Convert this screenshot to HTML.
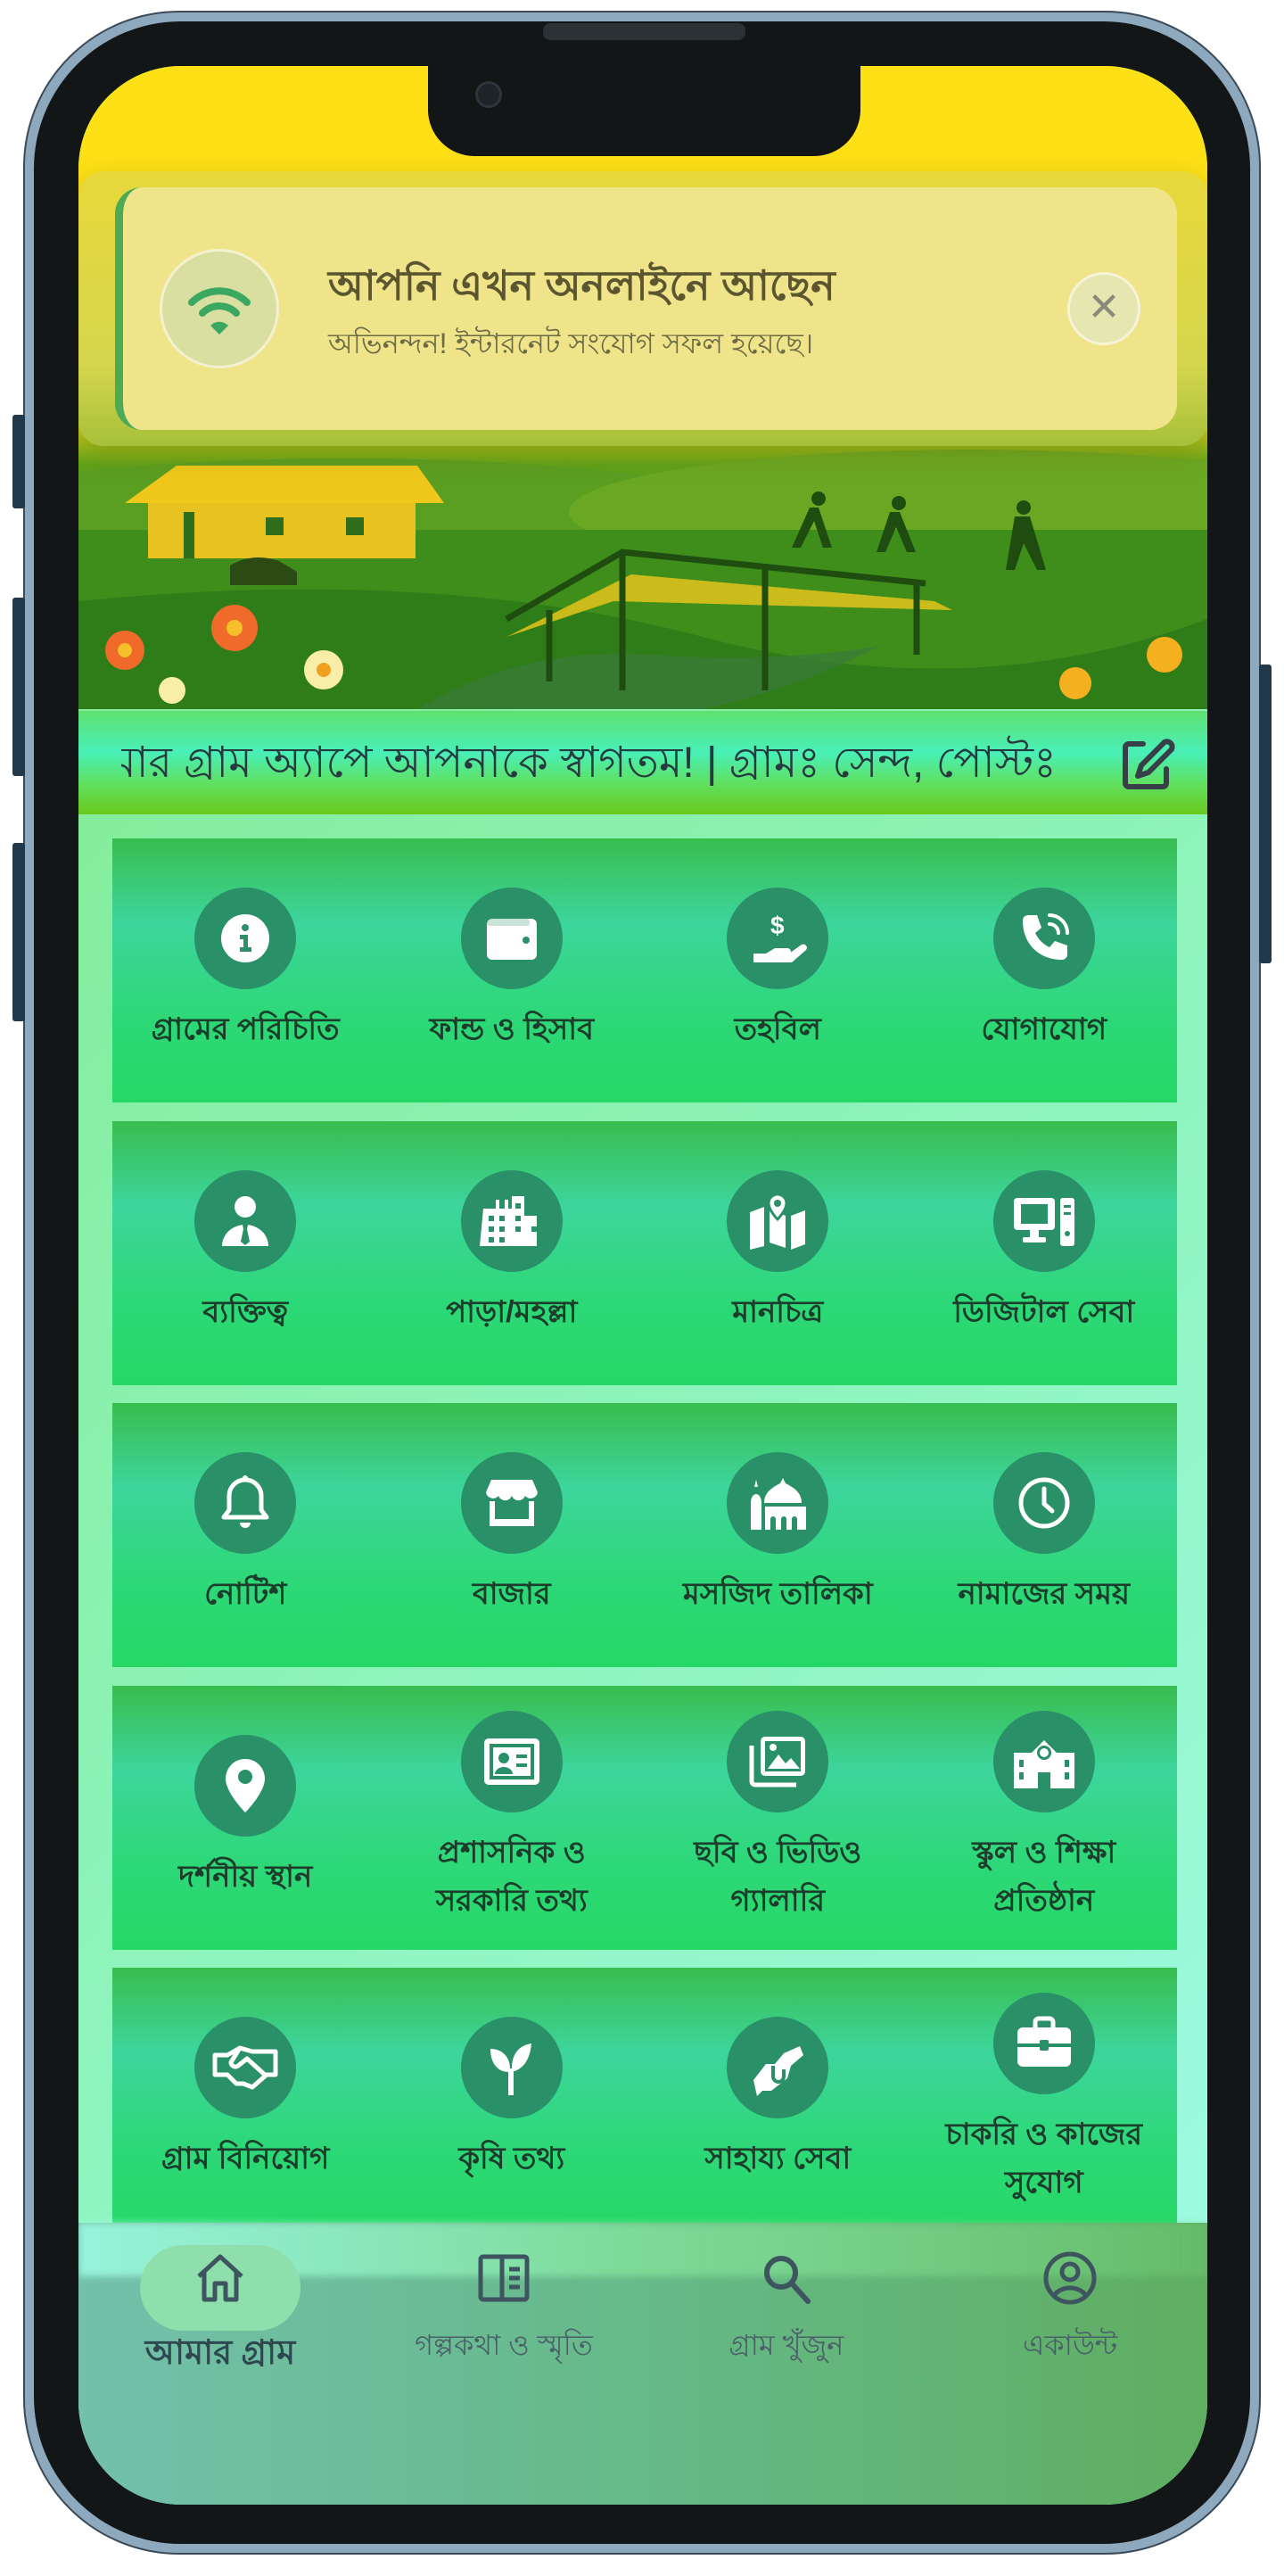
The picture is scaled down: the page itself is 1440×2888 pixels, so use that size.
<!DOCTYPE html>
<html><head><meta charset="utf-8">
<style>
*{margin:0;padding:0;box-sizing:border-box}
body{width:1440px;height:2888px;background:#fff;position:relative;overflow:hidden;font-family:"Liberation Sans","Noto Sans CJK SC",sans-serif}
.bn{font-family:"Liberation Sans","Noto Sans CJK SC","WenQuanYi Zen Hei",sans-serif}
.frame{position:absolute;left:26px;top:12px;width:1388px;height:2852px;border-radius:175px;background:#8ea8bd;border:2px solid #3a4a58}
.bezel{position:absolute;left:38px;top:24px;width:1364px;height:2828px;border-radius:165px;background:#121617}
.btn{position:absolute;background:#22394b;border-radius:3px}
.screen{position:absolute;left:88px;top:74px;width:1266px;height:2734px;border-radius:115px;overflow:hidden;background:linear-gradient(135deg,#7fe98a 0%,#8ff5c0 60%,#a0fbe8 100%)}
.notch{position:absolute;left:392px;top:-2px;width:485px;height:103px;background:#121617;border-radius:0 0 52px 52px}
.cam{position:absolute;left:53px;top:19px;width:30px;height:30px;border-radius:50%;background:#1d2327;border:3px solid #2c353a}
.top{position:absolute;left:0;top:0;width:1266px;height:721px;background:linear-gradient(#fde016 0%,#fde016 20%,#e4d820 55%,#5fa21a 62%,#3e8a18 100%)}
.notifwrap{position:absolute;left:0;top:118px;width:1266px;height:308px;border-radius:28px;background:linear-gradient(#e8d83a,#d5d64d 70%,#a6c03a);box-shadow:0 10px 30px rgba(120,110,0,.35)}
.notif{position:absolute;left:41px;top:136px;width:1191px;height:272px;border-radius:30px;background:#efe48a;border-left:9px solid #4caa55}
.wifi{position:absolute;left:91px;top:205px;width:134px;height:134px;border-radius:50%;background:#d8dfa0;border:3px solid #f4f1d0}
.close{position:absolute;left:1109px;top:231px;width:82px;height:82px;border-radius:50%;background:#e6e7b0;border:3px solid #f6f3d8;color:#8a8a7a;font-size:44px;text-align:center;line-height:74px}
.t1{position:absolute;left:280px;top:212px;font-size:46px;color:#5b5530;font-weight:bold;white-space:nowrap}
.t2{position:absolute;left:280px;top:286px;font-size:32px;color:#6b6a45;white-space:nowrap}
.marq{position:absolute;left:0;top:723px;width:1266px;height:116px;background:linear-gradient(#60e070 0%,#48f0b8 40%,#60e060 70%,#6ac81c 100%);overflow:hidden}
.clip{position:absolute;left:48px;top:0;width:1080px;height:116px;overflow:hidden}
.clip span{position:absolute;left:-66px;top:22px;font-size:48px;color:#273b3f;white-space:nowrap}
.card{position:absolute;left:38px;width:1194px;height:296px;background:linear-gradient(#38bd4e 0%,#3dd59c 32%,#2ed87a 65%,#25d865 100%);display:flex}
.cell{width:298.5px;height:100%;display:flex;flex-direction:column;align-items:center;justify-content:center}
.ic{width:114px;height:114px;border-radius:50%;background:#2a9068;display:flex;align-items:center;justify-content:center;margin-bottom:18px}
.lb{font-size:34px;color:#1c3d2b;text-align:center;line-height:54px;font-weight:bold;white-space:nowrap}
.nav{position:absolute;left:0;top:2418px;width:1266px;height:316px;background:linear-gradient(90deg,#73c0ab 0%,#66b988 50%,#5fae62 100%)}
.nav:before{content:"";position:absolute;left:0;top:0;width:100%;height:60px;background:linear-gradient(90deg,rgba(160,255,230,.8),rgba(140,240,160,.6),rgba(120,220,120,.3));filter:blur(4px)}
.ni{position:absolute;top:30px;width:320px;display:flex;flex-direction:column;align-items:center}
.ni .l{font-size:32px;color:#4a6068;margin-top:18px;white-space:nowrap}
.pill{position:absolute;left:69px;top:25px;width:180px;height:96px;border-radius:48px;background:#8fdfac}
</style></head><body>
<div class="frame"></div>
<div class="bezel"></div>
<div class="btn" style="left:14px;top:465px;width:14px;height:105px"></div>
<div class="btn" style="left:14px;top:670px;width:14px;height:200px"></div>
<div class="btn" style="left:14px;top:945px;width:14px;height:200px"></div>
<div class="btn" style="left:1412px;top:745px;width:14px;height:335px"></div>
<div style="position:absolute;left:609px;top:26px;width:227px;height:19px;border-radius:8px;background:#2a3235"></div>
<div class="screen">
 <div class="top">
  <svg width="1266" height="721" style="position:absolute;left:0;top:0">
   <ellipse cx="300" cy="520" rx="520" ry="80" fill="#5a9e22"/>
   <ellipse cx="1000" cy="500" rx="450" ry="70" fill="#6aa824"/>
   <rect x="0" y="520" width="1266" height="201" fill="#3f8e1c"/>
   <path d="M0 600 Q400 560 700 640 T1266 620 V721 H0Z" fill="#2f7d18"/>
   <path d="M380 721 Q500 650 640 660 T900 650 Q800 700 700 721Z" fill="#3a7a3a" opacity=".7"/>
   <polygon points="52,490 110,448 380,448 410,490" fill="#f0c81c"/>
   <rect x="78" y="490" width="300" height="62" fill="#e8c21e"/>
   <rect x="118" y="500" width="12" height="52" fill="#2f6d1a"/>
   <rect x="210" y="506" width="20" height="20" fill="#2f6d1a"/>
   <rect x="300" y="506" width="20" height="20" fill="#2f6d1a"/>
   <path d="M480 640 L620 570 L960 600 L980 610 L600 600Z" fill="#f0c81c" opacity=".8"/>
   <g stroke="#1f4d10" stroke-width="7" fill="none"><path d="M480 620 L610 545 L950 580"/><path d="M528 610 V690 M610 545 V700 M770 560 V700 M940 580 V660"/></g>
   <g fill="#1f4d10"><circle cx="830" cy="485" r="8"/><path d="M820 495 l-20 45 h10 l15-30 l10 30 h10 l-15-45Z"/><circle cx="920" cy="490" r="8"/><path d="M910 500 l-15 45 h10 l12-28 l12 28 h10 l-18-45Z"/><circle cx="1060" cy="495" r="8"/><path d="M1050 505 l-10 60 h10 l10-30 l15 30 h10 l-18-60Z"/></g>
   <path d="M170 560 q25-15 55-5 l20 12 v15 h-75Z" fill="#2b4a14"/>
   <g><circle cx="52" cy="655" r="22" fill="#f06a2a"/><circle cx="52" cy="655" r="8" fill="#f6c02a"/><circle cx="175" cy="630" r="26" fill="#f06a2a"/><circle cx="175" cy="630" r="9" fill="#f6c02a"/><circle cx="275" cy="677" r="22" fill="#f8eeaa"/><circle cx="275" cy="677" r="8" fill="#f0a020"/><circle cx="105" cy="700" r="15" fill="#f8eeaa"/><circle cx="1118" cy="692" r="18" fill="#f5b020"/><circle cx="1218" cy="660" r="20" fill="#f5b020"/></g>
  </svg>
 </div>
 <div class="notch"><div class="cam"></div></div>
 <div class="notifwrap"></div>
 <div class="notif"></div>
 <div class="wifi"><svg width="134" height="134" viewBox="0 0 134 134" style="position:absolute;left:-3px;top:-3px"><g fill="none" stroke="#3aa860" stroke-width="8" stroke-linecap="round"><path d="M36 60 a44 44 0 0 1 62 0"/><path d="M48 72 a27 27 0 0 1 38 0"/></g><path d="M67 96 l-10-10 a14 14 0 0 1 20 0Z" fill="#3aa860"/></svg></div>
 <div class="t1 bn">আপনি এখন অনলাইনে আছেন</div>
 <div class="t2 bn">অভিনন্দন! ইন্টারনেট সংযোগ সফল হয়েছে।</div>
 <div class="close">✕</div>
 <div class="marq"><div class="clip"><span class="bn">আমার গ্রাম অ্যাপে আপনাকে স্বাগতম! | গ্রামঃ সেন্দ, পোস্টঃ</span></div>
  <svg width="60" height="60" viewBox="0 0 60 60" style="position:absolute;left:1170px;top:31px"><g fill="none" stroke="#374048" stroke-width="6" stroke-linecap="round" stroke-linejoin="round"><path d="M24 6 H8 a4 4 0 0 0-4 4 V50 a4 4 0 0 0 4 4 H46 a4 4 0 0 0 4-4 V34"/><path d="M48 4 a6 6 0 0 1 8 8 L30 38 L18 42 L22 30Z"/></g></svg>
 </div>

 <div class="card" style="top:866px">
  <div class="cell"><div class="ic"><svg width="60" height="60" viewBox="0 0 60 60"><circle cx="30" cy="30" r="27" fill="#fff"/><circle cx="30" cy="18" r="4" fill="#2a9068"/><path d="M24 26 h9 v14 h4 v5 h-13 v-5 h4 v-9 h-4z" fill="#2a9068"/></svg></div><div class="lb bn">গ্রামের পরিচিতি</div></div>
  <div class="cell"><div class="ic"><svg width="64" height="60" viewBox="0 0 64 60"><rect x="4" y="8" width="56" height="46" rx="6" fill="#fff"/><rect x="4" y="8" width="48" height="8" rx="3" fill="#2a9068" opacity=".25"/><circle cx="48" cy="32" r="4" fill="#2a9068"/></svg></div><div class="lb bn">ফান্ড ও হিসাব</div></div>
  <div class="cell"><div class="ic"><svg width="70" height="70" viewBox="0 0 70 70"><text x="27" y="30" fill="#fff" font-size="28" font-weight="bold" font-family="Liberation Sans">$</text><path d="M8 52 h14 l10-6 h14 a4 4 0 0 1 0 8 h-12 l14-2 l14-10 a4 4 0 0 1 5 6 l-16 14 h-43z" fill="#fff"/></svg></div><div class="lb bn">তহবিল</div></div>
  <div class="cell"><div class="ic"><svg width="64" height="64" viewBox="0 0 64 64"><path d="M14 6 l10 0 l5 14 l-7 6 a34 34 0 0 0 16 16 l6-7 l14 5 v10 a6 6 0 0 1-6 6 C26 56 8 38 8 12 a6 6 0 0 1 6-6z" fill="#fff"/><g fill="none" stroke="#fff" stroke-width="4" stroke-linecap="round"><path d="M38 6 a20 20 0 0 1 20 20"/><path d="M38 16 a10 10 0 0 1 10 10"/></g></svg></div><div class="lb bn">যোগাযোগ</div></div>
 </div>

 <div class="card" style="top:1183px">
  <div class="cell"><div class="ic"><svg width="60" height="64" viewBox="0 0 60 64"><circle cx="30" cy="16" r="12" fill="#fff"/><path d="M4 60 a26 24 0 0 1 52 0z" fill="#fff"/><path d="M27 36 h6 l-1 5 l3 14 l-5 4 l-5-4 l3-14z" fill="#2a9068"/></svg></div><div class="lb bn">ব্যক্তিত্ব</div></div>
  <div class="cell"><div class="ic"><svg width="72" height="64" viewBox="0 0 72 64"><path d="M4 18 h14 v-10 h4 v10 h6 v-10 h4 v10 h4 v-14 h14 v22 h14 v34 h-64z" fill="#fff"/><g fill="#2a9068"><rect x="10" y="26" width="6" height="6"/><rect x="22" y="26" width="6" height="6"/><rect x="10" y="38" width="6" height="6"/><rect x="22" y="38" width="6" height="6"/><rect x="10" y="50" width="6" height="6"/><rect x="22" y="50" width="6" height="6"/><rect x="40" y="12" width="6" height="6"/><rect x="40" y="26" width="6" height="6"/><rect x="40" y="38" width="6" height="6"/><rect x="58" y="38" width="6" height="6"/></g></svg></div><div class="lb bn">পাড়া/মহল্লা</div></div>
  <div class="cell"><div class="ic"><svg width="70" height="64" viewBox="0 0 70 64"><path d="M4 22 l16-6 v44 l-16 4z M26 18 l18 8 v36 l-18-6z M50 26 l16-6 v38 l-16 6z" fill="#fff"/><path d="M35 2 a10 10 0 0 1 10 10 c0 8-10 18-10 18 s-10-10-10-18 a10 10 0 0 1 10-10z" fill="#fff" stroke="#2a9068" stroke-width="3"/><circle cx="35" cy="12" r="4" fill="#2a9068"/></svg></div><div class="lb bn">মানচিত্র</div></div>
  <div class="cell"><div class="ic"><svg width="76" height="64" viewBox="0 0 76 64"><rect x="4" y="6" width="46" height="36" rx="4" fill="#fff"/><rect x="12" y="13" width="30" height="22" fill="#2a9068"/><rect x="22" y="42" width="10" height="8" fill="#fff"/><rect x="14" y="50" width="26" height="6" rx="2" fill="#fff"/><rect x="56" y="6" width="16" height="54" rx="3" fill="#fff"/><g fill="#2a9068"><rect x="60" y="14" width="8" height="3"/><rect x="60" y="22" width="8" height="3"/><circle cx="64" cy="46" r="3"/></g></svg></div><div class="lb bn">ডিজিটাল সেবা</div></div>
 </div>

 <div class="card" style="top:1499px">
  <div class="cell"><div class="ic"><svg width="60" height="64" viewBox="0 0 60 64"><path d="M30 6 a18 18 0 0 1 18 18 v16 l6 8 h-48 l6-8 v-16 a18 18 0 0 1 18-18z" fill="none" stroke="#fff" stroke-width="5" stroke-linejoin="round"/><circle cx="30" cy="4" r="3" fill="#fff"/><path d="M24 54 a6 6 0 0 0 12 0z" fill="#fff"/></svg></div><div class="lb bn">নোটিশ</div></div>
  <div class="cell"><div class="ic"><svg width="70" height="64" viewBox="0 0 70 64"><path d="M6 20 l6-14 h46 l6 14 a8 8 0 0 1-14 4 a8 8 0 0 1-15 0 a8 8 0 0 1-15 0 a8 8 0 0 1-14-4z" fill="#fff"/><path d="M10 30 v28 h50 v-28 h-6 v20 h-38 v-20z" fill="#fff"/></svg></div><div class="lb bn">বাজার</div></div>
  <div class="cell"><div class="ic"><svg width="76" height="64" viewBox="0 0 76 64"><path d="M8 62 v-30 a6 10 0 0 1 12 0 v30z" fill="#fff"/><path d="M14 6 l2 8 h-4z" fill="#fff"/><path d="M44 4 l3 6 c12 6 18 12 18 22 h-42 c0-10 6-16 18-22z" fill="#fff"/><path d="M24 36 h46 v26 h-46z" fill="#fff"/><g fill="#2a9068"><path d="M30 62 v-12 a3 3 0 0 1 6 0 v12z"/><path d="M42 62 v-12 a3 3 0 0 1 6 0 v12z"/><path d="M54 62 v-12 a3 3 0 0 1 6 0 v12z"/></g></svg></div><div class="lb bn">মসজিদ তালিকা</div></div>
  <div class="cell"><div class="ic"><svg width="64" height="64" viewBox="0 0 64 64"><circle cx="32" cy="32" r="26" fill="none" stroke="#fff" stroke-width="5"/><path d="M32 16 v17 l9 8" fill="none" stroke="#fff" stroke-width="5" stroke-linecap="round"/></svg></div><div class="lb bn">নামাজের সময়</div></div>
 </div>

 <div class="card" style="top:1816px">
  <div class="cell"><div class="ic"><svg width="50" height="64" viewBox="0 0 50 64"><path d="M25 2 a22 22 0 0 1 22 22 c0 16-22 38-22 38 s-22-22-22-38 a22 22 0 0 1 22-22z" fill="#fff"/><circle cx="25" cy="22" r="8" fill="#2a9068"/></svg></div><div class="lb bn">দর্শনীয় স্থান</div></div>
  <div class="cell"><div class="ic"><svg width="70" height="64" viewBox="0 0 70 64"><rect x="4" y="6" width="62" height="52" rx="5" fill="#fff"/><rect x="10" y="12" width="50" height="40" fill="#2a9068"/><rect x="14" y="16" width="42" height="32" fill="#fff"/><circle cx="26" cy="28" r="6" fill="#2a9068"/><path d="M16 46 a10 8 0 0 1 20 0z" fill="#2a9068"/><rect x="40" y="24" width="12" height="4" fill="#2a9068"/><rect x="40" y="34" width="12" height="4" fill="#2a9068"/></svg></div><div class="lb bn">প্রশাসনিক ও<br>সরকারি তথ্য</div></div>
  <div class="cell"><div class="ic"><svg width="70" height="64" viewBox="0 0 70 64"><path d="M6 14 v40 a4 4 0 0 0 4 4 h46" fill="none" stroke="#fff" stroke-width="5"/><rect x="16" y="4" width="50" height="44" rx="5" fill="#fff"/><rect x="21" y="9" width="40" height="34" fill="#2a9068"/><path d="M24 40 l12-16 l8 10 l6-6 l10 12z" fill="#fff"/><circle cx="30" cy="16" r="4" fill="#fff"/></svg></div><div class="lb bn">ছবি ও ভিডিও<br>গ্যালারি</div></div>
  <div class="cell"><div class="ic"><svg width="76" height="64" viewBox="0 0 76 64"><path d="M4 22 h20 l14-14 l14 14 h20 v40 h-68z" fill="#fff"/><circle cx="38" cy="22" r="8" fill="#2a9068"/><circle cx="38" cy="22" r="5" fill="#fff"/><g fill="#2a9068"><rect x="10" y="30" width="5" height="8"/><rect x="10" y="44" width="5" height="8"/><rect x="61" y="30" width="5" height="8"/><rect x="61" y="44" width="5" height="8"/><rect x="31" y="44" width="14" height="18"/></g></svg></div><div class="lb bn">স্কুল ও শিক্ষা<br>প্রতিষ্ঠান</div></div>
 </div>

 <div class="card" style="top:2132px">
  <div class="cell"><div class="ic"><svg width="80" height="60" viewBox="0 0 80 60"><g fill="none" stroke="#fff" stroke-width="5" stroke-linejoin="round"><path d="M6 16 h14 l14-8 l14 4 h26 v26 h-10 l-16 14 l-10-4 l-8 0 l-10-10 h-14z"/><path d="M34 8 l-10 16 a5 5 0 0 0 8 4 l10-8 l20 18"/></g></svg></div><div class="lb bn">গ্রাম বিনিয়োগ</div></div>
  <div class="cell"><div class="ic"><svg width="60" height="66" viewBox="0 0 60 66"><path d="M27 64 v-26 C14 38 6 28 6 12 C20 12 28 22 28 34" fill="#fff"/><path d="M29 64 v-26 C40 36 50 28 52 6 C38 8 30 18 30 34" fill="#fff"/><rect x="26" y="34" width="6" height="30" fill="#fff"/></svg></div><div class="lb bn">কৃষি তথ্য</div></div>
  <div class="cell"><div class="ic"><svg width="70" height="64" viewBox="0 0 70 64"><path d="M8 46 l14-18 h10 l10-12 l18-8 l4 10 l-14 12 l-4 14 l-18 14 l-10 0 l-6 6 z" fill="#fff"/><path d="M30 30 v12 a6 6 0 0 0 12 0 v-8" fill="none" stroke="#2a9068" stroke-width="4"/></svg></div><div class="lb bn">সাহায্য সেবা</div></div>
  <div class="cell"><div class="ic"><svg width="68" height="64" viewBox="0 0 68 64"><path d="M24 14 v-6 a4 4 0 0 1 4-4 h12 a4 4 0 0 1 4 4 v6" fill="none" stroke="#fff" stroke-width="5"/><rect x="4" y="14" width="60" height="44" rx="6" fill="#fff"/><rect x="4" y="32" width="60" height="4" fill="#2a9068"/><rect x="29" y="28" width="10" height="12" rx="2" fill="#2a9068"/></svg></div><div class="lb bn">চাকরি ও কাজের<br>সুযোগ</div></div>
 </div>

 <div class="nav">
  <div class="pill"></div>
  <div class="ni" style="left:-1px"><svg width="64" height="64" viewBox="0 0 64 64"><g fill="none" stroke="#3e5560" stroke-width="5" stroke-linejoin="round"><path d="M8 30 L32 8 L56 30"/><path d="M14 26 V56 H26 V38 H38 V56 H50 V26"/></g></svg><div class="l bn" style="color:#2e4850;font-size:38px;font-weight:bold;margin-top:22px">আমার গ্রাম</div></div>
  <div class="ni" style="left:317px"><svg width="64" height="64" viewBox="0 0 64 64"><g fill="none" stroke="#3e5560" stroke-width="5"><rect x="6" y="8" width="52" height="48" rx="3"/><path d="M30 8 V56"/><path d="M38 22 h12 M38 32 h12 M38 42 h12"/></g></svg><div class="l bn">গল্পকথা ও স্মৃতি</div></div>
  <div class="ni" style="left:634px"><svg width="64" height="64" viewBox="0 0 64 64"><g fill="none" stroke="#3e5560" stroke-width="6" stroke-linecap="round"><circle cx="26" cy="26" r="16"/><path d="M38 38 L56 58"/></g></svg><div class="l bn">গ্রাম খুঁজুন</div></div>
  <div class="ni" style="left:952px"><svg width="64" height="64" viewBox="0 0 64 64"><g fill="none" stroke="#3e5560" stroke-width="5"><circle cx="32" cy="32" r="27"/><circle cx="32" cy="25" r="9"/><path d="M14 52 a20 16 0 0 1 36 0"/></g></svg><div class="l bn">একাউন্ট</div></div>
 </div>
</div>
</body></html>
